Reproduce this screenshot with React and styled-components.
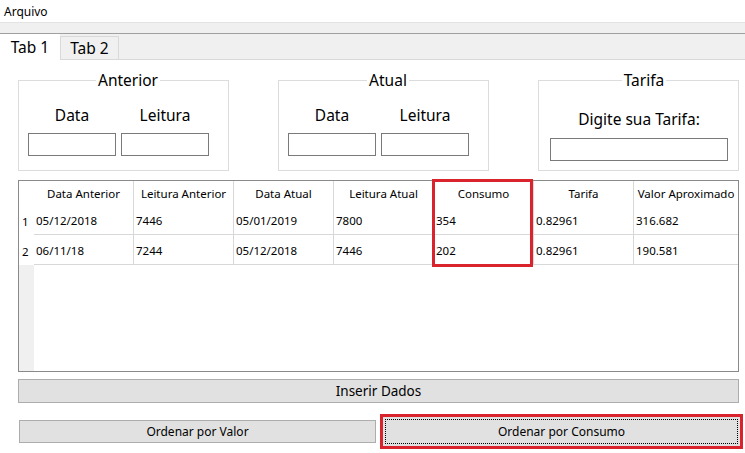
import React from "react";
import styled, { createGlobalStyle } from "styled-components";

const GlobalStyle = createGlobalStyle`
	html, body {
		margin: 0;
		padding: 0;
		background: #fff;
	}
	body {
		font-family: "Noto Sans", "Open Sans", sans-serif;
		color: #000;
	}
	* {
		box-sizing: border-box;
	}
`;

const Window = styled.div`
	width: 745px;
	height: 453px;
	display: flex;
	flex-direction: column;
	background: #fff;
	overflow: hidden;
`;

const MenuBar = styled.div`
	height: 22px;
	display: flex;
	align-items: center;
	padding-left: 4px;
	font-size: 12px;
`;

const ToolStrip = styled.div`
	height: 12px;
	background: #f0f0f0;
	border-top: 1px solid #e3e3e3;
	border-bottom: 1px solid #a0a0a0;
`;

const TabBar = styled.div`
	height: 26px;
	display: flex;
	align-items: flex-end;
	background: #f0f0f0;
	border-bottom: 1px solid #d9d9d9;
`;

const Tab = styled.div`
	display: flex;
	align-items: center;
	justify-content: center;
	font-size: 15.5px;
	width: ${props => (props.$active ? "60px" : "59px")};
	height: ${props => (props.$active ? "26px" : "23px")};
	margin-bottom: ${props => (props.$active ? "-1px" : "0")};
	background: ${props => (props.$active ? "#fff" : "#f0f0f0")};
	border: ${props => (props.$active ? "none" : "1px solid #d9d9d9")};
	border-bottom: none;
	position: relative;
`;

const Content = styled.div`
	flex: 1;
	padding: 10px 0 0 18px;
	background: #fff;
`;

const GroupRow = styled.div`
	width: 721px;
	display: flex;
	justify-content: space-between;
`;

const GroupBox = styled.fieldset`
	width: ${props => props.$width}px;
	height: 101px;
	margin: 0;
	min-width: 0;
	padding: ${props => props.$pad};
	border: 1px solid #dcdcdc;
`;

const GroupTitle = styled.legend`
	margin: 0 auto;
	padding: 0 2px;
	font-size: 15.5px;
	line-height: 20px;
`;

const Fields = styled.div`
	display: grid;
	grid-template-columns: ${props => props.$cols};
	column-gap: 5px;
	row-gap: ${props => props.$rowGap}px;
`;

const FieldLabel = styled.div`
	font-size: 15.5px;
	line-height: 20px;
	text-align: center;
`;

const TextInput = styled.div`
	height: 23px;
	border: 1px solid #7a7a7a;
	background: #fff;
`;

const Table = styled.div`
	position: relative;
	margin-top: 9px;
	width: 721px;
	height: 192px;
	display: flex;
	flex-direction: column;
	border: 1px solid #8a8a8a;
	font-size: 11.5px;
`;

const GridRow = styled.div`
	display: grid;
	grid-template-columns: 15px repeat(6, 100px) 1fr;
	height: ${props => (props.$header ? "24px" : "30px")};
`;

const Cell = styled.div`
	display: flex;
	align-items: center;
	justify-content: ${props => (props.$header ? "center" : "flex-start")};
	padding-left: ${props => (props.$header ? "0" : "2px")};
	padding-top: ${props => (props.$header ? "0" : "2px")};
	border-right: ${props => (props.$last ? "none" : "1px solid #d8d8d8")};
	border-bottom: ${props => (props.$header ? "none" : "1px solid #d8d8d8")};
	white-space: nowrap;
	overflow: hidden;
`;

const RowNumber = styled.div`
	display: flex;
	align-items: center;
	padding: 2px 0 0 3px;
	background: #fff;
`;

const Filler = styled.div`
	flex: 1;
	background: linear-gradient(to right, #f0f0f0 15px, #fff 15px);
`;

const Highlight = styled.div`
	position: absolute;
	pointer-events: none;
	border: 3px solid #d9232d;
	left: ${props => props.$left}px;
	top: ${props => props.$top}px;
	width: ${props => props.$width}px;
	height: ${props => props.$height}px;
`;

const Button = styled.button`
	display: flex;
	align-items: center;
	justify-content: center;
	margin: 0;
	padding: 0;
	font-family: inherit;
	color: #000;
	background: #e1e1e1;
	border: 1px solid #adadad;
	font-size: ${props => props.$size}px;
	width: ${props => props.$width};
	height: ${props => props.$height}px;
`;

const InsertButton = styled(Button)`
	margin-top: 7px;
`;

const ButtonRow = styled.div`
	margin-top: 11px;
	display: flex;
	align-items: center;
	gap: 4px;
	padding-left: 1px;
`;

const RedFrame = styled.div`
	width: 363px;
	height: 35px;
	border: 3px solid #d9232d;
	display: flex;
`;

const FocusButton = styled(Button)`
	border: none;
	outline: 1px dotted #000;
	outline-offset: -3px;
`;

const columns = [
	"Data Anterior",
	"Leitura Anterior",
	"Data Atual",
	"Leitura Atual",
	"Consumo",
	"Tarifa",
	"Valor Aproximado"
];

const rows = [
	["05/12/2018", "7446", "05/01/2019", "7800", "354", "0.82961", "316.682"],
	["06/11/18", "7244", "05/12/2018", "7446", "202", "0.82961", "190.581"]
];

const ReadingGroup = ({ title }) => (
	<GroupBox $width={211} $pad="15px 0 0 9px">
		<GroupTitle>{title}</GroupTitle>
		<Fields $cols="88px 88px" $rowGap={8}>
			<FieldLabel>Data</FieldLabel>
			<FieldLabel>Leitura</FieldLabel>
			<TextInput />
			<TextInput />
		</Fields>
	</GroupBox>
);

const App = () => {
	return (
		<Window>
			<GlobalStyle />
			<MenuBar>Arquivo</MenuBar>
			<ToolStrip />
			<TabBar>
				<Tab $active>Tab 1</Tab>
				<Tab>Tab 2</Tab>
			</TabBar>
			<Content>
				<GroupRow>
					<ReadingGroup title="Anterior" />
					<ReadingGroup title="Atual" />
					<GroupBox $width={201} $pad="19px 0 0 11px">
						<GroupTitle>Tarifa</GroupTitle>
						<Fields $cols="178px" $rowGap={9}>
							<FieldLabel>Digite sua Tarifa:</FieldLabel>
							<TextInput />
						</Fields>
					</GroupBox>
				</GroupRow>

				<Table>
					<GridRow $header>
						<RowNumber />
						{columns.map((col, i) => (
							<Cell $header key={col} $last={i === columns.length - 1}>
								{col}
							</Cell>
						))}
					</GridRow>
					{rows.map((row, r) => (
						<GridRow key={r}>
							<RowNumber>{r + 1}</RowNumber>
							{row.map((value, i) => (
								<Cell key={i} $last={i === row.length - 1}>
									{value}
								</Cell>
							))}
						</GridRow>
					))}
					<Filler />
					<Highlight $left={413} $top={-2} $width={101} $height={88} />
				</Table>

				<InsertButton $size={13.5} $width="721px" $height={24}>
					Inserir Dados
				</InsertButton>

				<ButtonRow>
					<Button $size={12} $width="357px" $height={23}>
						Ordenar por Valor
					</Button>
					<RedFrame>
						<FocusButton $size={12} $width="100%" $height={29}>
							Ordenar por Consumo
						</FocusButton>
					</RedFrame>
				</ButtonRow>
			</Content>
		</Window>
	);
};

export default App;
